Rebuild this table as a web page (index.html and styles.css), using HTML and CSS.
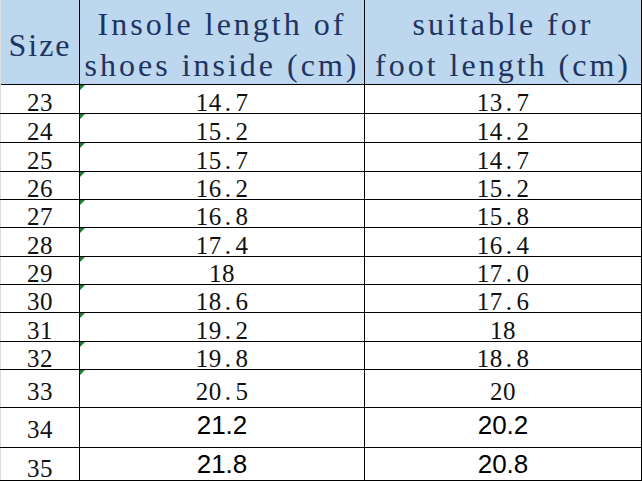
FILE: index.html
```html
<!DOCTYPE html>
<html>
<head>
<meta charset="utf-8">
<link rel="stylesheet" href="styles.css">
</head>
<body>
<div class="sheet">
  <div class="row head">
    <div class="cell c1 hsize">Size</div>
    <div class="cell c2 htext">Insole length of<br>shoes inside (cm)</div>
    <div class="cell c3 htext">suitable for<br>foot length (cm)</div>
  </div>
  <div class="row r29"><div class="cell c1">23</div><div class="cell c2 flag">14<span class="dot">.</span>7</div><div class="cell c3">13<span class="dot">.</span>7</div></div>
  <div class="row r29"><div class="cell c1">24</div><div class="cell c2 flag">15<span class="dot">.</span>2</div><div class="cell c3">14<span class="dot">.</span>2</div></div>
  <div class="row r29"><div class="cell c1">25</div><div class="cell c2 flag">15<span class="dot">.</span>7</div><div class="cell c3">14<span class="dot">.</span>7</div></div>
  <div class="row r28"><div class="cell c1">26</div><div class="cell c2 flag">16<span class="dot">.</span>2</div><div class="cell c3">15<span class="dot">.</span>2</div></div>
  <div class="row r28"><div class="cell c1">27</div><div class="cell c2 flag">16<span class="dot">.</span>8</div><div class="cell c3">15<span class="dot">.</span>8</div></div>
  <div class="row r29"><div class="cell c1">28</div><div class="cell c2 flag">17<span class="dot">.</span>4</div><div class="cell c3">16<span class="dot">.</span>4</div></div>
  <div class="row r28"><div class="cell c1">29</div><div class="cell c2 flag">18</div><div class="cell c3">17<span class="dot">.</span>0</div></div>
  <div class="row r28"><div class="cell c1">30</div><div class="cell c2 flag">18<span class="dot">.</span>6</div><div class="cell c3">17<span class="dot">.</span>6</div></div>
  <div class="row r29"><div class="cell c1">31</div><div class="cell c2 flag">19<span class="dot">.</span>2</div><div class="cell c3">18</div></div>
  <div class="row r28"><div class="cell c1">32</div><div class="cell c2 flag">19<span class="dot">.</span>8</div><div class="cell c3">18<span class="dot">.</span>8</div></div>
  <div class="row r38"><div class="cell c1">33</div><div class="cell c2 flag">20<span class="dot">.</span>5</div><div class="cell c3">20</div></div>
  <div class="row r40"><div class="cell c1">34</div><div class="cell c2 sans">21.2</div><div class="cell c3 sans">20.2</div></div>
  <div class="row r33"><div class="cell c1">35</div><div class="cell c2 sans">21.8</div><div class="cell c3 sans">20.8</div></div>
</div>
</body>
</html>
```

FILE: styles.css
```css
html, body {
  margin: 0;
  padding: 0;
  background: #ffffff;
}

.sheet {
  width: 642px;
  display: flex;
  flex-direction: column;
  font-family: "Liberation Serif", "Times New Roman", serif;
  color: #111111;
}

.row {
  display: grid;
  grid-template-columns: 80px 285px 277px;
  box-sizing: border-box;
  border-bottom: 1px solid #000000;
}

.cell {
  box-sizing: border-box;
  border-right: 1px solid #000000;
  display: flex;
  justify-content: center;
  align-items: flex-end;
  text-align: center;
  font-family: "Liberation Serif", "Times New Roman", serif;
  font-size: 25px;
  line-height: 20px;
  letter-spacing: 0.5px;
  position: relative;
}

.c1 {
  border-left: 1px solid #dcdcdc;
}

.head {
  height: 85px;
  background: #bdd7ee;
}

.head .cell {
  align-items: flex-start;
  color: #1e3461;
  font-size: 32px;
  line-height: 41px;
  letter-spacing: 3px;
  padding-top: 4px;
  white-space: nowrap;
}

.head .hsize {
  padding-top: 25px;
  letter-spacing: 2px;
}

.r28 { height: 28px; }
.r29 { height: 29px; }
.r38 { height: 38px; }
.r40 { height: 40px; }
.r33 { height: 33px; }

.r38 .cell { padding-bottom: 5px; }
.r40 .cell { padding-bottom: 7px; }
.r33 .cell { padding-bottom: 1px; }

.dot {
  margin: 0 4px 0 3px;
}

.cell.sans {
  font-family: "Liberation Sans", Arial, sans-serif;
  font-size: 26px;
  letter-spacing: 0;
  color: #000000;
}

.r40 .sans { padding-bottom: 12px; }
.r33 .sans { padding-bottom: 6px; }

.flag::before {
  content: "";
  position: absolute;
  left: 0;
  top: 0;
  width: 0;
  height: 0;
  border-top: 5px solid #1e7b34;
  border-right: 5px solid transparent;
}
```
